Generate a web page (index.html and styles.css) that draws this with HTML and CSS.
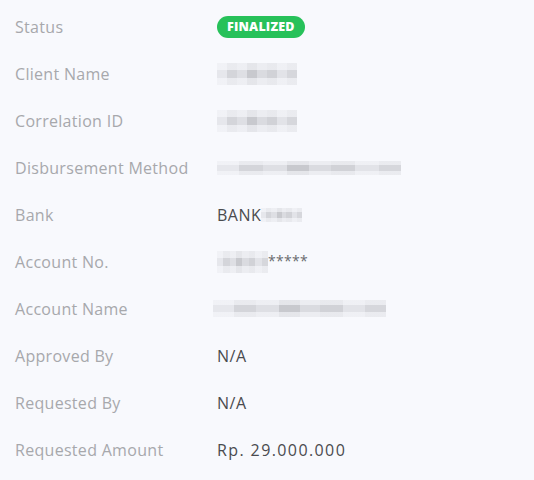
FILE: index.html
```html
<!DOCTYPE html>
<html>
<head>
<meta charset="utf-8">
<link rel="stylesheet" href="styles.css">
</head>
<body>
<div class="details">
  <div class="row"><div class="label">Status</div><div class="value"><span class="badge">FINALIZED</span></div></div>
  <div class="row"><div class="label">Client Name</div><div class="value"><span class="mosaic m-client"></span></div></div>
  <div class="row"><div class="label">Correlation ID</div><div class="value"><span class="mosaic m-corr"></span></div></div>
  <div class="row"><div class="label">Disbursement Method</div><div class="value"><span class="mosaic m-method"></span></div></div>
  <div class="row"><div class="label">Bank</div><div class="value">BANK<span class="mosaic m-bank"></span></div></div>
  <div class="row"><div class="label">Account No.</div><div class="value"><span class="mosaic m-acc"></span><span class="stars">*****</span></div></div>
  <div class="row"><div class="label">Account Name</div><div class="value"><span class="mosaic m-name"></span></div></div>
  <div class="row"><div class="label">Approved By</div><div class="value">N/A</div></div>
  <div class="row"><div class="label">Requested By</div><div class="value">N/A</div></div>
  <div class="row"><div class="label">Requested Amount</div><div class="value"><span class="amount">Rp. 29.000.000</span></div></div>
</div>
</body>
</html>
```
FILE: styles.css
```css
html, body {
  margin: 0;
  background: #f8f9fd;
}
body {
  font-family: "Open Sans", "Liberation Sans", sans-serif;
  width: 534px;
  height: 480px;
  overflow: hidden;
}
.details {
  padding: 3px 0 0 15px;
}
.row {
  display: grid;
  grid-template-columns: 202px 1fr;
  align-items: center;
  height: 47px;
}
.label {
  color: #a7a8ac;
  font-size: 16px;
  letter-spacing: 0.3px;
}
.value {
  color: #4a4b4f;
  font-size: 16px;
  letter-spacing: 0.5px;
  display: flex;
  align-items: center;
}
.amount {
  letter-spacing: 1.4px;
}
.badge {
  display: inline-block;
  background: #27c15a;
  color: #fff;
  font-weight: 800;
  font-size: 12.5px;
  letter-spacing: 0.2px;
  line-height: 22px;
  height: 22px;
  padding: 0 10px;
  border-radius: 11px;
}
.mosaic {
  display: inline-block;
  height: 16px;
  background-image:
    linear-gradient(180deg, rgba(248,249,253,0.6) 0 30%, transparent 30% 70%, rgba(248,249,253,0.6) 70%),
    linear-gradient(90deg, #e6e7ec 0 12%, #d4d5da 12% 25%, #dedfe4 25% 38%, #c8c9ce 38% 50%, #dadbe0 50% 62%, #d1d2d7 62% 75%, #e2e3e8 75% 88%, #d6d7dc 88%);
}
.m-client { width: 80px; height: 22px; }
.m-corr { width: 80px; height: 22px; }
.m-method { width: 184px; height: 14px; }
.m-bank { width: 41px; height: 14px; }
.m-acc { width: 51px; height: 22px; }
.m-name { width: 173px; height: 17px; margin-left: -4px; }
.stars {
  font-size: 14px;
  color: #6a6b70;
  letter-spacing: 0.3px;
  position: relative;
  top: -1px;
}
```
